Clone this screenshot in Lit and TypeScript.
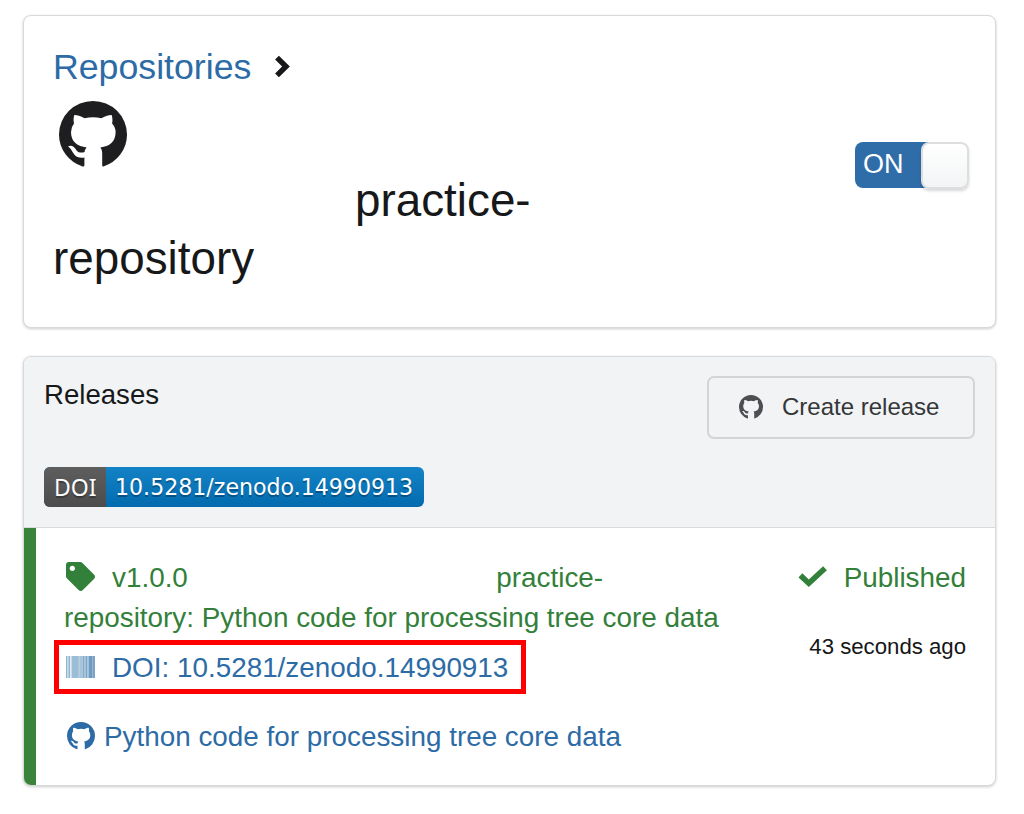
import { LitElement, html, css, svg } from "lit";
import { customElement } from "lit/decorators.js";

const octocat = html`<svg viewBox="0 0 68 67" preserveAspectRatio="none" fill="currentColor"><path d="M34 0A34 33.5 0 0 0 0 33.5A34 33.5 0 0 0 23.6 65.4Q25.4 65.9 25.4 64V56.6Q18.5 57.6 15.3 53.6C12.6 49.8 12 47.6 9 45.6 12.2 43.6 15.2 45.6 17.6 49.4 19.6 52 23 52 25.6 51Q25.8 48.3 27.6 46.4C18.5 45.2 12 41 12 31Q12 26 15 22.4Q14 18 15.3 14C19 14 22.4 15.4 25.6 17.2Q34 15.2 42.4 17.2C45.6 15.4 49 14 52.7 14Q54 18 53.1 22.4Q56.6 26 56.6 31C56.6 41 50.5 45.2 41.4 46.4Q43.2 48.5 43.2 52V64Q43.2 65.9 44.4 65.4A34 33.5 0 0 0 68 33.5A34 33.5 0 0 0 34 0Z"/></svg>`;

const chevron = html`<svg viewBox="0 0 16 23" fill="none" stroke="currentColor" stroke-width="5.4"><path d="M3 2.6 12 11.5 3 20.4"/></svg>`;

const tag = html`<svg viewBox="0 0 512 512" fill="currentColor"><path d="M0 252.118V48C0 21.49 21.49 0 48 0h204.118a48 48 0 0 1 33.941 14.059l211.882 211.882c18.745 18.745 18.745 49.137 0 67.882L293.823 497.941c-18.745 18.745-49.137 18.745-67.882 0L14.059 286.059A48 48 0 0 1 0 252.118zM112 64c-26.51 0-48 21.49-48 48s21.49 48 48 48 48-21.49 48-48-21.49-48-48-48z"/></svg>`;

const check = html`<svg viewBox="0 0 29 22" fill="none" stroke="currentColor" stroke-width="5.6"><path d="M2.4 9.4 10.8 17.2 27 2.2"/></svg>`;

const bars: Array<[number, number, string]> = [
  [0, 1.5, "#8fb4cf"], [1.5, 1, "#c4d9e8"], [2.5, 1.5, "#8fb4d0"], [4, 1.5, "#e4eef5"],
  [5.5, 7, "#9dbdd6"], [12.5, 1, "#8bb0ce"], [13.5, 3, "#a6c4da"], [16.5, 1.5, "#86abca"],
  [18, 1.5, "#a9c6dc"], [19.5, 2, "#7ba3c6"], [21.5, 1.5, "#a4c1d8"], [23, 3, "#6f9ac1"],
  [26, 1, "#94b5d2"], [27, 2, "#7ba3c6"],
];
const barcode = html`<svg viewBox="0 0 29 21" preserveAspectRatio="none">${bars.map(
  ([x, w, c]) => svg`<rect x=${x} y="0" width=${w} height="21" fill=${c} />`
)}</svg>`;

@customElement("app-root")
export class AppRoot extends LitElement {
  static styles = css`
    :host { display: block; box-sizing: border-box; width: 1024px; height: 814px; padding: 15px 28px 0 23px; background: #fff; color: #17181a; font-family: "Liberation Sans", Arial, sans-serif; overflow: hidden; }
    * { box-sizing: border-box; }
    svg { display: block; width: 100%; height: 100%; }
    a { color: #2c6ba6; text-decoration: none; }
    span, a { white-space: nowrap; }
    .card { width: 973px; border: 1px solid #d8d9da; border-radius: 8px; box-shadow: 0 1px 3px rgba(0,0,0,.2); background: #fff; }
    .repo { display: flex; justify-content: space-between; height: 313px; padding: 26px 26px 0 29px; }
    .crumb { display: flex; align-items: center; height: 48px; font-size: 35.7px; }
    .crumb a { padding-top: 3px; }
    .chev { width: 16px; height: 23px; margin-left: 23px; }
    .mark { width: 68px; height: 67px; margin: 11px 0 4px 6px; color: #1e1e20; }
    .name { font-size: 45.8px; line-height: 58px; }
    .name div:first-child { padding-left: 302px; }
    .toggle { display: flex; justify-content: space-between; width: 114px; height: 46px; margin-top: 100px; border-radius: 8px; background: linear-gradient(90deg, #2f6da8 78px, transparent 78px); color: #fff; font-size: 27px; line-height: 45px; padding-left: 8px; }
    .knob { width: 48px; height: 47px; border: 2px solid #dcdedf; border-radius: 8px; background: linear-gradient(#fff, #f2f4f5); box-shadow: 0 2px 3px rgba(0,0,0,.16); }
    .releases { margin-top: 28px; height: 430px; overflow: hidden; }
    .head { display: flex; justify-content: space-between; height: 171px; padding: 19px 20px 0; background: #f2f3f5; border-bottom: 1px solid #d9dadb; }
    .title { font-size: 27.6px; line-height: 38px; }
    .badge { display: flex; width: 380px; height: 40px; margin-top: 53px; border-radius: 6px; overflow: hidden; background: linear-gradient(#1482c6, #026bae); color: #fff; font: 22.1px/41px "DejaVu Sans", sans-serif; text-shadow: 0 2px 0 rgba(0,0,0,.3); }
    .badge .key { width: 62px; padding-left: 10px; background: linear-gradient(#5e5e5e, #4c4c4c); font: 23px/40px "Noto Sans", sans-serif; }
    .badge .val { padding-left: 9px; }
    .create { display: flex; align-items: center; width: 268px; height: 63px; border: 2px solid #d2d5d7; border-radius: 7px; padding: 0 0 1px 30px; color: #343638; font-size: 24px; }
    .create i { width: 24px; height: 24px; margin-right: 19px; color: #4c4e51; }
    .body { display: flex; justify-content: space-between; height: 257px; border-left: 12px solid #39833b; padding: 30px 29px 0 28px; font-size: 27.85px; color: #32803a; }
    .line { display: flex; align-items: center; height: 40px; }
    .tag { width: 29px; height: 29px; margin: 0 17px 3px 2px; }
    .second { margin-left: 308.5px; }
    .doi { width: 472px; height: 54px; margin: 2px 0 0 -10px; border: 5px solid #fe0000; padding: 0 0 0 7px; display: flex; align-items: center; }
    .doi a { padding-top: 1px; }
    .doi i { width: 29px; height: 22px; margin: 0 17px 1px 0; }
    .src { display: flex; align-items: center; height: 40px; margin-top: 23px; }
    .src i { width: 28px; height: 28px; margin: 0 9px 3px 3px; color: #2c6ba6; }
    .status { display: flex; flex-direction: column; align-items: flex-end; }
    .check { width: 29px; height: 22px; margin: 0 17px 3px 0; }
    .ago { margin-top: 34px; line-height: 30px; font-size: 22.2px; color: #151617; }
  `;

  render() {
    return html`
      <section class="card repo">
        <div>
          <div class="crumb"><a>Repositories</a><i class="chev">${chevron}</i></div>
          <div class="mark">${octocat}</div>
          <div class="name"><div><span>practice-</span></div><div><span>repository</span></div></div>
        </div>
        <div class="toggle"><span>ON</span><div class="knob"></div></div>
      </section>
      <section class="card releases">
        <div class="head">
          <div>
            <div class="title"><span>Releases</span></div>
            <div class="badge"><span class="key">DOI</span><span class="val">10.5281/zenodo.14990913</span></div>
          </div>
          <div class="create"><i>${octocat}</i><span>Create release</span></div>
        </div>
        <div class="body">
          <div>
            <div class="line"><i class="tag">${tag}</i><span>v1.0.0</span><span class="second">practice-</span></div>
            <div class="line"><span>repository: Python code for processing tree core data</span></div>
            <div class="doi"><i>${barcode}</i><a>DOI: 10.5281/zenodo.14990913</a></div>
            <div class="src"><i>${octocat}</i><a>Python code for processing tree core data</a></div>
          </div>
          <div class="status">
            <div class="line"><i class="check">${check}</i><span>Published</span></div>
            <span class="ago">43 seconds ago</span>
          </div>
        </div>
      </section>`;
  }
}
